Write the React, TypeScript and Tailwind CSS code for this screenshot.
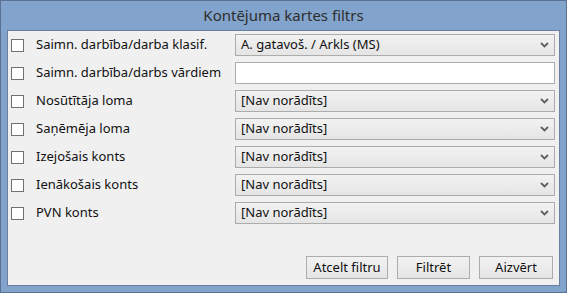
import React from "react";

const font = { fontFamily: '"Noto Sans", "Open Sans", sans-serif' };

function Chevron() {
  return (
    <svg width="9" height="6" viewBox="0 0 9 6" className="shrink-0">
      <path d="M1 1 L4.5 4.5 L8 1" stroke="#606060" strokeWidth="1.8" fill="none" />
    </svg>
  );
}

function Select({ value }: { value: string }) {
  return (
    <div className="flex h-[22px] w-[320px] items-center justify-between border border-[#acacac] bg-gradient-to-b from-[#f2f2f2] to-[#e5e5e5] pl-[5px] pr-[5px] text-[13px] text-[#111]">
      <span>{value}</span>
      <Chevron />
    </div>
  );
}

function Row({ label, children }: { label: string; children: React.ReactNode }) {
  return (
    <div className="flex h-[22px] items-center">
      <div className="ml-[3px] h-[13px] w-[13px] shrink-0 border border-[#707070] bg-white" />
      <div className="ml-[12px] w-[199px] shrink-0 text-[13px] text-[#111]">{label}</div>
      {children}
    </div>
  );
}

function Btn({ label, w }: { label: string; w: string }) {
  return (
    <div
      className={`flex h-[23px] items-center justify-center border border-[#acacac] bg-gradient-to-b from-[#f2f2f2] to-[#e5e5e5] text-[13px] text-[#111] ${w}`}
    >
      {label}
    </div>
  );
}

export default function App() {
  const rows = [
    "Nosūtītāja loma",
    "Saņēmēja loma",
    "Izejošais konts",
    "Ienākošais konts",
    "PVN konts",
  ];
  return (
    <div style={font} className="flex h-[293px] w-[567px] flex-col border border-[#5b7194] bg-[#82a3cb]">
      <div className="flex h-[29px] items-center justify-center text-[15px] text-[#2e2e2e]">
        Kontējuma kartes filtrs
      </div>
      <div className="mx-[6px] mb-[6px] flex flex-1 flex-col border border-[#6a7f9f] bg-[#f0f0f0]">
        <div className="flex flex-col gap-[6px] pt-[3px]">
          <Row label="Saimn. darbība/darba klasif.">
            <Select value="A. gatavoš. / Arkls (MS)" />
          </Row>
          <Row label="Saimn. darbība/darbs vārdiem">
            <div className="h-[22px] w-[320px] border border-[#abadb3] bg-white" />
          </Row>
          {rows.map((r) => (
            <Row key={r} label={r}>
              <Select value="[Nav norādīts]" />
            </Row>
          ))}
        </div>
        <div className="mt-auto mb-[6px] mr-[6px] flex justify-end gap-[9px]">
          <Btn label="Atcelt filtru" w="w-[82px]" />
          <Btn label="Filtrēt" w="w-[73px]" />
          <Btn label="Aizvērt" w="w-[74px]" />
        </div>
      </div>
    </div>
  );
}
